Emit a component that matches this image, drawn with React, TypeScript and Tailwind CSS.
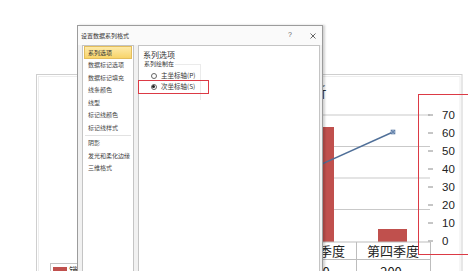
import React from 'react';

const cjk = { fontFamily: '"Noto Sans CJK SC", "Noto Sans", sans-serif' };

const navTop = ['系列选项', '数据标记选项', '数据标记填充', '线条颜色', '线型', '标记线颜色', '标记线样式'];
const navBottom = ['阴影', '发光和柔化边缘', '三维格式'];

const axisLabels = [70, 60, 50, 40, 30, 20, 10, 0];

const Chart = () => (
  <svg
    className="absolute left-[35px] top-[73px]"
    width={433}
    height={198}
    viewBox="35 73 433 198"
  >
    <rect x={36.5} y={74.5} width={425.5} height={230} fill="#fff" stroke="#cfcfcf" />
    <rect x={38.5} y={76.5} width={421.5} height={230} fill="none" stroke="#ededed" />
    <text x={326.5} y={97} textAnchor="end" fontSize={14} fill="#333" style={cjk}>
      销售分析
    </text>
    {[115, 146.5, 178, 209.5].map((y) => (
      <line key={y} x1={120} x2={430} y1={y} y2={y} stroke="#c9c9c9" />
    ))}
    <rect x={300} y={127} width={34} height={115} fill="#c0504d" />
    <rect x={378} y={229} width={29} height={13} fill="#c0504d" />
    <line x1={300} y1={173.8} x2={393} y2={132} stroke="#4f6f98" strokeWidth={1.4} />
    <rect x={391} y={130} width={4} height={4} fill="#9bb1cf" stroke="#5d7ca6" strokeWidth={0.6} />
    <path d="M391 130l4 4M395 130l-4 4" stroke="#4f6f98" strokeWidth={0.6} />
    {axisLabels.map((v, i) => {
      const y = 115 + i * 18;
      return (
        <g key={v}>
          <line x1={428} x2={433} y1={y} y2={y} stroke="#8c8c8c" />
          <text
            x={442}
            y={y + 4}
            fontSize={11.5}
            fill="#222"
            style={{ fontFamily: '"Liberation Sans", Arial, sans-serif' }}
          >
            {v}
          </text>
        </g>
      );
    })}
    <line x1={120} x2={430} y1={242} y2={242} stroke="#bdbdbd" />
    <line x1={120} x2={430} y1={259.5} y2={259.5} stroke="#bdbdbd" />
    <line x1={356.5} x2={356.5} y1={242} y2={280} stroke="#bdbdbd" />
    <line x1={430.5} x2={430.5} y1={242} y2={280} stroke="#bdbdbd" />
    <text x={319} y={256} textAnchor="middle" fontSize={13} fill="#222" style={cjk}>
      第三季度
    </text>
    <text x={393} y={256} textAnchor="middle" fontSize={13} fill="#222" style={cjk}>
      第四季度
    </text>
    <text x={319} y={277} textAnchor="middle" fontSize={13} fill="#222" style={cjk}>
      300
    </text>
    <text x={391} y={277} textAnchor="middle" fontSize={13} fill="#222" style={cjk}>
      200
    </text>
    <rect x={50.5} y={263.5} width={44} height={20} fill="#fff" stroke="#c4c4c4" />
    <rect x={53} y={267} width={14} height={8} fill="#c0504d" />
    <text x={69} y={274} fontSize={9} fill="#333" style={cjk}>
      销量
    </text>
  </svg>
);

const NavItem = ({ label, active }: { label: string; active?: boolean }) => (
  <div
    className={
      active
        ? 'mx-px flex h-[12.5px] items-center border border-[#e3bd5c] bg-gradient-to-b from-[#fdeaa8] to-[#f8d469] pl-[3px] text-[6px] text-[#333]'
        : 'mx-px flex h-[12.5px] items-center pl-[4px] text-[6px] text-[#444]'
    }
  >
    {label}
  </div>
);

const Radio = ({ label, checked }: { label: string; checked?: boolean }) => (
  <div className="flex h-[11px] items-center pl-[7.5px]">
    <span className="flex h-[6px] w-[6px] items-center justify-center rounded-full border border-[#666] bg-white">
      {checked && <span className="h-[2.5px] w-[2.5px] rounded-full bg-[#222]" />}
    </span>
    <span className="ml-[4.5px] text-[6.5px] leading-none text-[#333]">{label}</span>
  </div>
);

const Dialog = () => (
  <div
    className="absolute left-[77px] top-[25px] flex h-[262px] w-[246px] flex-col border border-[#9c9c9c] bg-[#f1f1f1] shadow-[2px_0_2px_rgba(0,0,0,0.18)]"
    style={cjk}
  >
    <div className="flex h-[19px] shrink-0 items-center bg-[#fafafa] pl-[3px] pr-[6px]">
      <span className="text-[6px] text-[#333]">设置数据系列格式</span>
      <span
        className="ml-auto text-[7px] text-[#666]"
        style={{ fontFamily: '"Liberation Sans", Arial, sans-serif' }}
      >
        ?
      </span>
      <svg className="ml-[18px]" width={6} height={6} viewBox="0 0 6 6">
        <path d="M0.5 0.5l5 5M5.5 0.5l-5 5" stroke="#555" strokeWidth={0.9} />
      </svg>
    </div>
    <div className="flex flex-1 gap-[4px] pl-[4px] pr-[2px]">
      <div className="w-[52px] border border-[#c4c4c4] bg-white">
        {navTop.map((label, i) => (
          <NavItem key={label} label={label} active={i === 0} />
        ))}
        <div className="mx-[2px] my-px border-t border-[#e2e2e2]" />
        {navBottom.map((label) => (
          <NavItem key={label} label={label} />
        ))}
      </div>
      <div className="relative flex-1 border border-[#c4c4c4] bg-white pl-[4px]">
        <div className="mt-[4px] text-[8px] leading-[10px] text-[#333]">系列选项</div>
        <div className="relative w-[55px]">
          <div className="absolute left-[2px] top-[4px] h-[36px] w-[56px] border-t border-r border-[#ebebeb]" />
          <div className="relative ml-px w-fit bg-white pr-[1px] text-[6px] leading-[8px] text-[#333]">
            系列绘制在
          </div>
          <div className="relative mt-[2px]">
            <Radio label="主坐标轴(P)" />
            <Radio label="次坐标轴(S)" checked />
          </div>
        </div>
        <div className="absolute left-[-1px] top-[34px] h-[14px] w-[71px] border-[1.5px] border-[#dc3a45]" />
      </div>
    </div>
  </div>
);

export default function App() {
  return (
    <div className="relative h-[271px] w-[468px] overflow-hidden bg-white">
      <Chart />
      <Dialog />
      <div className="absolute left-[418px] top-[94px] h-[161px] w-[60px] border-[1.5px] border-[#dc3a45]" />
    </div>
  );
}
